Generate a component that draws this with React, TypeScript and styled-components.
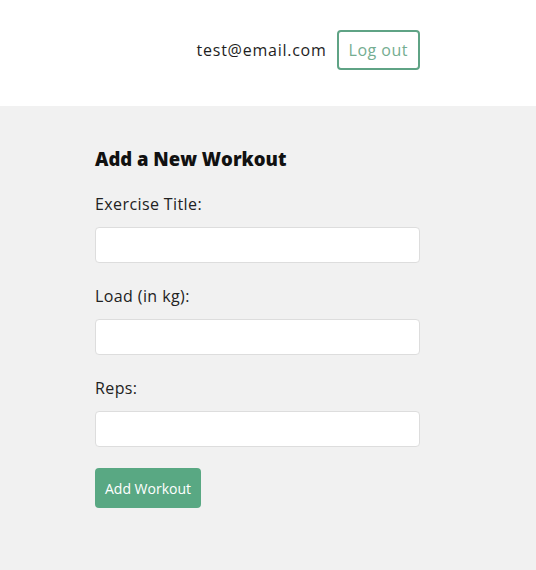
import styled, { createGlobalStyle } from 'styled-components'

const GlobalStyle = createGlobalStyle`
  html, body {
    margin: 0;
    padding: 0;
    background: #f1f1f1;
    font-family: "Open Sans", "DejaVu Sans", sans-serif;
  }
`

const Header = styled.header`
  background: #fff;
  height: 106px;
  box-sizing: border-box;
  padding: 30px 116px 0 95px;
  display: flex;
  justify-content: flex-end;
  align-items: flex-start;
`

const Account = styled.div`
  display: flex;
  align-items: center;
  gap: 10px;
  height: 40px;
`

const Email = styled.span`
  font-size: 16px;
  letter-spacing: 0.75px;
  color: #1e1e1e;
`

const LogoutButton = styled.button`
  background: #fff;
  color: #74ad91;
  border: 2px solid #5fa385;
  border-radius: 4px;
  padding: 6px 10px;
  height: 40px;
  font-family: inherit;
  font-size: 16px;
  letter-spacing: 0.5px;
  line-height: 24px;
  cursor: pointer;
`

const Main = styled.main`
  padding: 39px 0 40px 95px;
`

const Form = styled.form`
  width: 325px;
  display: flex;
  flex-direction: column;
  align-items: flex-start;
`

const Title = styled.h3`
  margin: 0 0 18px;
  font-size: 18.5px;
  line-height: 28px;
  font-weight: 800;
  color: #111;
`

const Label = styled.label`
  font-size: 16px;
  line-height: 26px;
  letter-spacing: 0.4px;
  color: #222;
`

const Input = styled.input`
  display: block;
  width: 100%;
  height: 36px;
  box-sizing: border-box;
  margin: 10px 0 20px;
  padding: 10px;
  border: 1px solid #ddd;
  border-radius: 4px;
  background: #fff;
  font-family: inherit;
`

const SubmitButton = styled.button`
  background: #59a883;
  color: #fff;
  border: 0;
  border-radius: 4px;
  padding: 10px;
  height: 40px;
  margin-top: 1px;
  font-family: inherit;
  font-size: 14px;
  cursor: pointer;
`

export default function App() {
  return (
    <>
      <GlobalStyle />
      <Header>
        <Account>
          <Email>test@email.com</Email>
          <LogoutButton>Log out</LogoutButton>
        </Account>
      </Header>
      <Main>
        <Form onSubmit={(e) => e.preventDefault()}>
          <Title>Add a New Workout</Title>
          <Label>Exercise Title:</Label>
          <Input type="text" />
          <Label>Load (in kg):</Label>
          <Input type="number" />
          <Label>Reps:</Label>
          <Input type="number" />
          <SubmitButton>Add Workout</SubmitButton>
        </Form>
      </Main>
    </>
  )
}
